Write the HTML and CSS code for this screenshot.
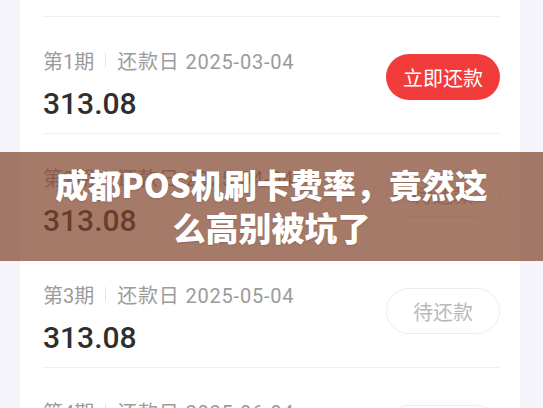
FILE: index.html
```html
<!DOCTYPE html>
<html lang="zh-CN">
<head>
<meta charset="utf-8">
<title>还款计划</title>
<link rel="stylesheet" href="styles.css">
</head>
<body>
<div class="page">
  <div class="card">
    <div class="row">
      <div class="info">
        <div class="meta"><span>第1期</span><i class="bar"></i><span class="date">还款日 2025-03-04</span></div>
        <div class="amount">313.08</div>
      </div>
      <div class="btn btn-primary">立即还款</div>
    </div>
    <div class="row">
      <div class="info">
        <div class="meta"><span>第2期</span><i class="bar"></i><span class="date">还款日 2025-04-04</span></div>
        <div class="amount">313.08</div>
      </div>
      <div class="btn btn-ghost">待还款</div>
    </div>
    <div class="row">
      <div class="info">
        <div class="meta"><span>第3期</span><i class="bar"></i><span class="date">还款日 2025-05-04</span></div>
        <div class="amount">313.08</div>
      </div>
      <div class="btn btn-ghost">待还款</div>
    </div>
    <div class="row">
      <div class="info">
        <div class="meta"><span>第4期</span><i class="bar"></i><span class="date">还款日 2025-06-04</span></div>
        <div class="amount">313.08</div>
      </div>
      <div class="btn btn-ghost">待还款</div>
    </div>
  </div>
  <div class="banner">成都POS机刷卡费率，竟然这<br>么高别被坑了</div>
</div>
</body>
</html>
```
FILE: styles.css
```css
html, body {
  margin: 0;
  padding: 0;
}
body {
  background: #f4f4fa;
  width: 543px;
  height: 408px;
  overflow: hidden;
  font-family: Roboto, "Noto Sans CJK SC", sans-serif;
}
.page {
  position: relative;
  height: 408px;
  overflow: hidden;
}
.card {
  margin: 0 23px 0 20px;
  background: #ffffff;
  padding: 16px 20px 0 23px;
}
.row {
  box-sizing: border-box;
  height: 117px;
  border-top: 1px solid #f0f0f2;
  display: flex;
  justify-content: space-between;
  align-items: flex-start;
}
.info {
  padding-top: 31px;
  display: flex;
  flex-direction: column;
}
.meta {
  display: flex;
  align-items: center;
  height: 24px;
  font-size: 20px;
  color: #9b9b9b;
}
.date {
  letter-spacing: 0.8px;
}
.bar {
  display: block;
  width: 1px;
  height: 14px;
  background: #e2e2e2;
  margin: 0 11px;
}
.amount {
  margin-top: 14px;
  height: 36px;
  line-height: 36px;
  font-size: 30px;
  font-weight: 500;
  color: #2e2e2e;
}
.btn {
  box-sizing: border-box;
  margin-top: 37px;
  width: 114px;
  height: 46px;
  border-radius: 23px;
  display: flex;
  align-items: center;
  justify-content: center;
  font-family: "Noto Sans CJK SC", sans-serif;
  font-size: 20px;
}
.btn-primary {
  background: #f23b3b;
  color: #ffffff;
}
.btn-ghost {
  border: 1px solid #eeeeee;
  color: #b9b9b9;
}
.banner {
  position: absolute;
  left: 0;
  right: 0;
  top: 152px;
  height: 109px;
  box-sizing: border-box;
  padding-top: 11px;
  background: rgba(130, 68, 42, 0.71);
  color: #ffffff;
  text-align: center;
  font-family: "Noto Sans CJK SC", sans-serif;
  font-weight: 900;
  font-size: 33px;
  line-height: 43px;
  text-shadow: 0 1px 2px rgba(0, 0, 0, 0.15);
}
```
